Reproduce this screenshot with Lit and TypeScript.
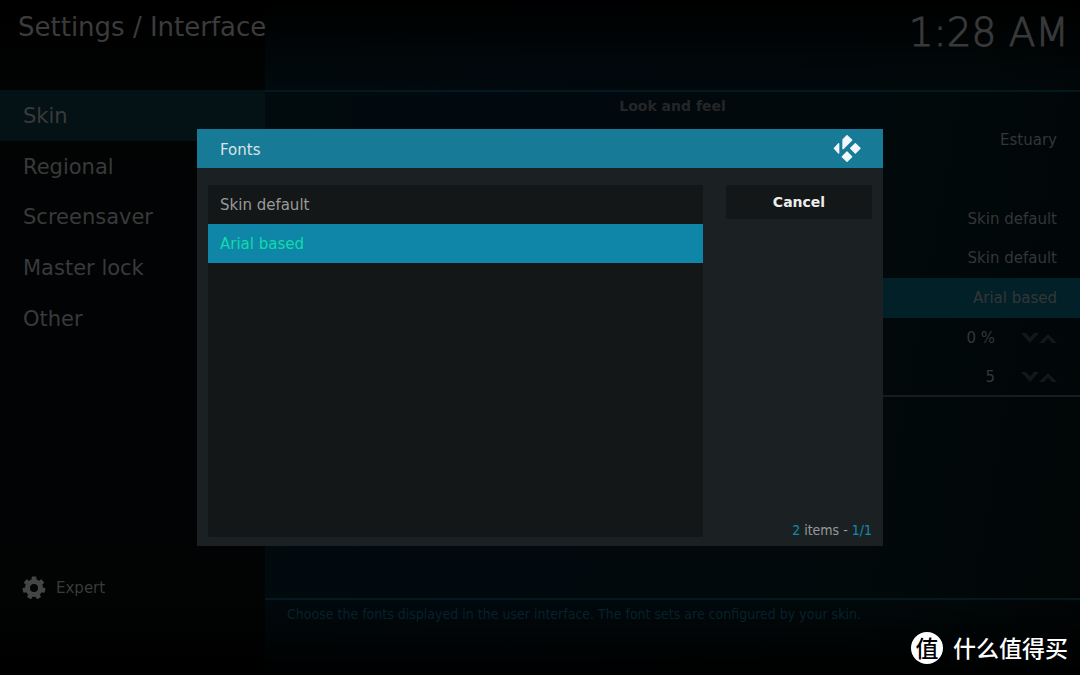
import { LitElement, html, css, svg, nothing } from "lit";
import { customElement, state } from "lit/decorators.js";
import { classMap } from "lit/directives/class-map.js";

interface Setting {
  value: string;
  spinner?: boolean;
  active?: boolean;
}

const SECTIONS = ["Skin", "Regional", "Screensaver", "Master lock", "Other"];

const SETTINGS: Setting[] = [
  { value: "Estuary" },
  { value: "" },
  { value: "Skin default" },
  { value: "Skin default" },
  { value: "Arial based", active: true },
  { value: "0 %", spinner: true },
  { value: "5", spinner: true },
];

const FONT_SETS = ["Skin default", "Arial based"];

const GEAR_TEETH = [0, 1, 2, 3, 4, 5, 6].map((n) => (n * 360) / 7);

const gearIcon = html`
  <svg class="gear" viewBox="0 0 24 24" aria-hidden="true">
    <circle cx="12" cy="12" r="6.5" fill="none" stroke="currentColor" stroke-width="5" />
    ${GEAR_TEETH.map(
      (angle) => svg`<rect x="9.6" y="0.6" width="4.8" height="5" rx="0.8" fill="currentColor"
        transform="rotate(${angle} 12 12)" />`
    )}
  </svg>
`;

const kodiLogo = html`
  <svg class="logo" viewBox="0 3 84 84" aria-hidden="true">
    <g fill="currentColor" stroke="currentColor" stroke-width="4" stroke-linejoin="round">
      <path d="M4 43 L17 29 V57 Z" />
      <path d="M30 17 L42 5 L56 18 L30 44 Z" />
      <path d="M53 43 L67 29 L81 43 L67 57 Z" />
      <path d="M28 68 L42 54 L56 68 L42 82 Z" />
    </g>
  </svg>
`;

@customElement("app-root")
export class AppRoot extends LitElement {
  @state() private section = "Skin";
  @state() private fontSet = "Arial based";

  static styles = css`
    :host {
      display: block;
      font-family: "DejaVu Sans", Verdana, sans-serif;
      font-size: 15px;
      line-height: 20px;
      color: #343637;
    }
    * {
      box-sizing: border-box;
    }
    button {
      font: inherit;
      color: inherit;
      background: none;
      border: 0;
      margin: 0;
      padding: 0;
      cursor: pointer;
    }
    ul {
      list-style: none;
      margin: 0;
      padding: 0;
    }
    h1,
    h2,
    p {
      margin: 0;
      font-weight: 400;
    }
    .screen {
      position: relative;
      display: grid;
      grid-template-columns: 265px 1fr;
      min-height: 100vh;
      background: #000;
    }
    .sidebar {
      z-index: 1;
      display: flex;
      flex-direction: column;
      background: linear-gradient(#000, #020303 14%, #020305 60%, #020303 88%, #000);
    }
    .title {
      height: 90px;
      padding: 11px 0 0 18px;
      font-size: 26px;
      line-height: 32px;
      white-space: nowrap;
      color: #3b3b3b;
    }
    .sections {
      display: grid;
      grid-auto-rows: 1fr;
      height: 253px;
    }
    .section {
      width: 100%;
      height: 100%;
      padding: 2px 0 0 23px;
      text-align: left;
      font-size: 21px;
      color: #393a3a;
    }
    .section.current {
      background: #041216;
    }
    .level {
      display: flex;
      align-items: center;
      gap: 10px;
      height: 40px;
      margin: auto 0 67px;
      padding-left: 22px;
      color: #393a3a;
    }
    .gear {
      width: 24px;
      height: 24px;
      color: #454545;
    }
    .content {
      display: flex;
      flex-direction: column;
      background:
        linear-gradient(#000, transparent 13%, transparent 88%, #000),
        linear-gradient(100deg, #010a0d, #01090e 35%, #01090b 75%, #010506);
    }
    .topbar {
      display: flex;
      justify-content: flex-end;
      height: 90px;
      padding: 9px 11px 0 0;
      font-size: 39px;
      line-height: 48px;
      font-weight: 200;
      -webkit-text-stroke: 1px #393939;
      color: #393939;
    }
    .panel {
      flex: 1;
      border-top: 2px solid #041820;
    }
    .group {
      padding: 4px 0;
      text-align: center;
      font-size: 14px;
      font-weight: 700;
      color: #242627;
    }
    .settings {
      display: grid;
      grid-auto-rows: 1fr;
      height: 277px;
      box-shadow: inset 0 -2px #171c1e;
    }
    .setting {
      display: flex;
      align-items: center;
      justify-content: flex-end;
      gap: 26px;
      padding-right: 23px;
    }
    .setting.active {
      background: #022027;
    }
    .spinner {
      display: flex;
      color: #12181a;
    }
    .chevron {
      display: block;
      width: 18px;
      height: 10px;
    }
    .help {
      height: 77px;
      padding: 4px 22px;
      border-top: 2px solid #041820;
      font-family: "DejaVu Sans Condensed", "DejaVu Sans", sans-serif;
      font-size: 14px;
      color: #05222b;
    }
    .dialog {
      position: absolute;
      z-index: 2;
      inset: 0;
      margin: auto;
      width: min(686px, 96vw);
      height: 417px;
      display: flex;
      flex-direction: column;
      padding: 0;
      border: 0;
      background: #1b2123;
      color: #989a9a;
    }
    .dialog-head {
      display: flex;
      align-items: center;
      justify-content: space-between;
      height: 39px;
      padding: 0 22px 0 23px;
      background: #177b98;
      color: #dce3e5;
    }
    .dialog-title {
      padding-top: 2px;
      font-size: 15px;
    }
    .logo {
      width: 28px;
      height: 28px;
      color: #f2f7f9;
    }
    .dialog-body {
      flex: 1;
      display: grid;
      grid-template-columns: 1fr 146px;
      gap: 23px;
      padding: 17px 11px 9px;
    }
    .fonts {
      border-radius: 2px;
      background: #141718;
    }
    .font {
      display: block;
      width: 100%;
      height: 39px;
      padding-left: 12px;
      text-align: left;
    }
    .font.chosen {
      background: #0f86a7;
      color: #12dbaa;
    }
    .actions {
      display: flex;
      flex-direction: column;
      justify-content: space-between;
    }
    .cancel {
      height: 34px;
      border-radius: 2px;
      background: #141718;
      font-size: 14px;
      font-weight: 700;
      color: #eceeee;
    }
    .count {
      text-align: right;
      font-family: "DejaVu Sans Condensed", "DejaVu Sans", sans-serif;
      font-size: 14px;
      line-height: 14px;
    }
    .number {
      color: #1489ab;
    }
    .watermark {
      position: absolute;
      z-index: 2;
      right: 12px;
      bottom: 11px;
      display: flex;
      gap: 10px;
      font-family: "Noto Sans CJK SC", sans-serif;
      font-size: 23px;
      line-height: 30px;
      color: #fff;
      font-weight: 500;
    }
    .seal {
      width: 32px;
      height: 32px;
      border-radius: 50%;
      background: #fff;
      color: #000;
      text-align: center;
    }
  `;

  private renderSetting(item: Setting) {
    return html`
      <li class=${classMap({ setting: true, active: !!item.active })}>
        <span>${item.value}</span>
        ${item.spinner
          ? html`<span class="spinner">
              <button aria-label="Decrease">
                <svg class="chevron" viewBox="0 0 18 10">
                  <path d="M0 0 H5 L9 4.5 L13 0 H18 L9 10 Z" fill="currentColor" />
                </svg>
              </button>
              <button aria-label="Increase">
                <svg class="chevron" viewBox="0 0 18 10">
                  <path d="M0 10 H5 L9 5.5 L13 10 H18 L9 1 Z" fill="currentColor" />
                </svg>
              </button>
            </span>`
          : nothing}
      </li>
    `;
  }

  render() {
    return html`
      <div class="screen">
        <aside class="sidebar">
          <h1 class="title">Settings / Interface</h1>
          <nav class="sections">
            ${SECTIONS.map(
              (name) => html`<button
                class=${classMap({ section: true, current: name === this.section })}
                @click=${() => (this.section = name)}
              >${name}</button>`
            )}
          </nav>
          <button class="level">${gearIcon}<span>Expert</span></button>
        </aside>

        <main class="content">
          <header class="topbar"><time>1:28 AM</time></header>
          <section class="panel">
            <h2 class="group">Look and feel</h2>
            <ul class="settings">${SETTINGS.map((item) => this.renderSetting(item))}</ul>
          </section>
          <p class="help">Choose the fonts displayed in the user interface. The font sets are configured by your skin.</p>
        </main>

        <dialog class="dialog" open aria-labelledby="dialog-title">
          <header class="dialog-head">
            <h2 class="dialog-title" id="dialog-title">Fonts</h2>
            ${kodiLogo}
          </header>
          <div class="dialog-body">
            <ul class="fonts">
              ${FONT_SETS.map(
                (name) => html`<li>
                  <button
                    class=${classMap({ font: true, chosen: name === this.fontSet })}
                    @click=${() => (this.fontSet = name)}
                  >${name}</button>
                </li>`
              )}
            </ul>
            <div class="actions">
              <button class="cancel">Cancel</button>
              <p class="count"><span class="number">2</span> items - <span class="number">1/1</span></p>
            </div>
          </div>
        </dialog>

        <div class="watermark"><span class="seal">值</span><span>什么值得买</span></div>
      </div>
    `;
  }
}
